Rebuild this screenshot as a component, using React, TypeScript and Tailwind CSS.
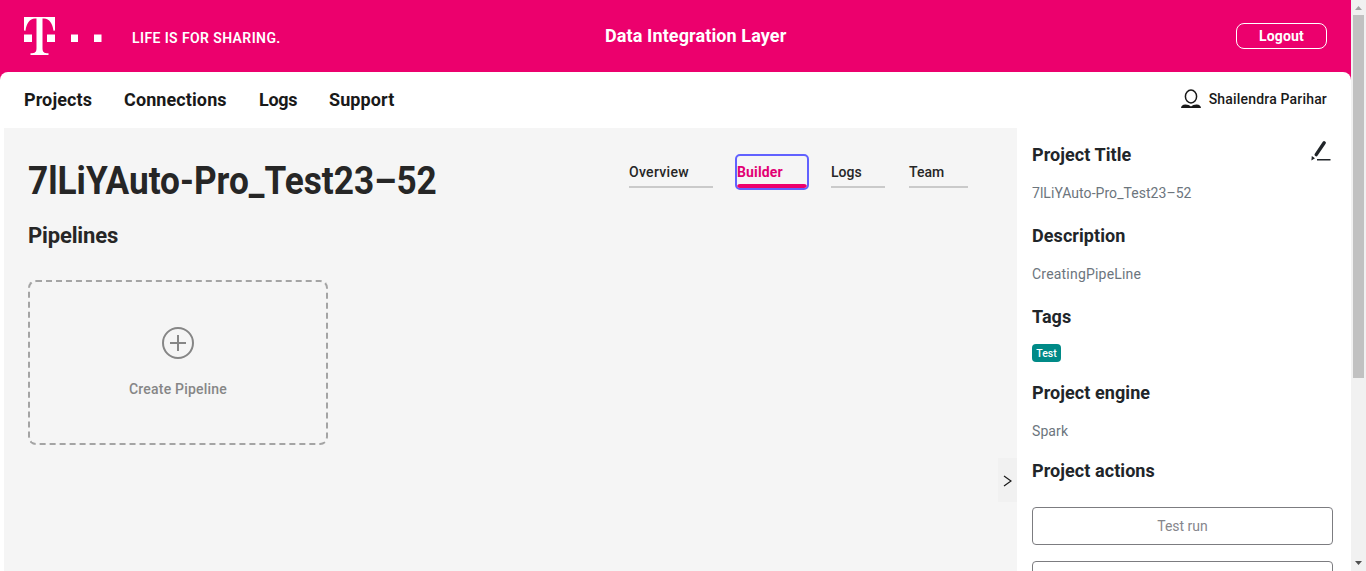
import React from 'react';

function TelekomLogo() {
  return (
    <svg width="78" height="38" viewBox="0 0 78 38" fill="#fff" aria-hidden="true">
      <path d="M0 0h31v13.500l-1.500.2C28.500 6.500 25.500 1.700 20 1.500H18.500V31c0 4 1.200 5.200 6 5.300V38H6.500v-1.700c4.800-.1 6-1.300 6-5.300V1.500H11C5.500 1.700 2.500 6.500 1.500 13.700L0 13.500z" />
      <path d="M0 17.500h8v7.500H0zM23 17.500h8v7.500h-8zM47 17.500h7v7.500h-7zM70 17.500h7.500v7.500H70z" />
    </svg>
  );
}

function Header() {
  return (
    <header className="flex h-[72px] shrink-0 items-center px-6 text-white">
      <TelekomLogo />
      <span className="ml-[30px] mt-[3px] w-[473px] text-[14px] font-semibold leading-5 tracking-[0.4px]">LIFE IS FOR SHARING.</span>
      <span className="grow text-[18px] font-bold leading-6 tracking-[0.11px]">Data Integration Layer</span>
      <button className="h-[26px] w-[91px] rounded-[8px] border border-white text-[14px] font-bold leading-5 tracking-[0.15px]">Logout</button>
    </header>
  );
}

function Nav() {
  return (
    <nav className="flex h-14 shrink-0 items-center rounded-t-[8px] bg-white px-6 text-[18px] font-bold leading-6 tracking-[0.1px] text-[#191919]">
      <a className="w-[100px]">Projects</a>
      <a className="w-[135px]">Connections</a>
      <a className="w-[70px] tracking-[-0.3px]">Logs</a>
      <a className="grow">Support</a>
      <svg width="20" height="20" viewBox="0 0 20 20" className="-mt-[2px] mr-2" aria-hidden="true">
        <ellipse cx="10" cy="7.500" rx="5.600" ry="6.400" fill="none" stroke="#191919" strokeWidth="1.500" />
        <path d="M0 19c.3-2.200 1.600-3.200 4.200-3.500 2.100-.1 4.500.8 5.800 2 1.300-1.200 3.700-2.100 5.800-2 2.600.3 3.900 1.300 4.200 3.500z" fill="#191919" />
      </svg>
      <span className="-mt-[2px] text-[14px] font-medium tracking-[0.18px]">Shailendra Parihar</span>
    </nav>
  );
}

function Tabs() {
  return (
    <div className="flex text-[14px] font-medium leading-5 text-[#262626]">
      <a className="mt-2 h-[26px] w-[84px] border-b-2 border-[#cacaca] tracking-[0.3px]">Overview</a>
      <a className="ml-[22px] h-9 w-[74px] overflow-hidden rounded-[5px] border-2 border-[#6161ff] pt-[6px] font-bold tracking-[0.15px] text-[#e20074]">
        Builder
        <span className="mt-[2px] block h-1 rounded-t-[3px] bg-[#ec006d]" />
      </a>
      <a className="ml-[22px] mt-2 h-[26px] w-[54px] border-b-2 border-[#cacaca]">Logs</a>
      <a className="ml-6 mt-2 h-[26px] w-[59px] border-b-2 border-[#cacaca]">Team</a>
    </div>
  );
}

function Builder() {
  return (
    <main className="flex grow bg-[#f5f5f5]">
      <div className="grow pl-6">
        <div className="flex pt-[26px]">
          <div className="w-[601px]">
            <h1 className="mt-[3px] origin-left scale-x-[0.927] whitespace-nowrap text-[38px] font-bold leading-[48px] text-[#262626]">7lLiYAuto-Pro_Test23–52</h1>
          </div>
          <Tabs />
        </div>
        <h2 className="mt-4 text-[22px] font-bold leading-[30px] tracking-[-0.15px] text-[#262626]">Pipelines</h2>
        <button className="mt-[29px] flex h-[165px] w-[300px] flex-col items-center rounded-[8px] border-2 border-dashed border-[#a4a4a4] pt-[45px] text-[#868686]">
          <svg width="32" height="32" viewBox="0 0 32 32" fill="none" stroke="currentColor" strokeWidth="2" aria-hidden="true">
            <circle cx="16" cy="16" r="15" />
            <path d="M8 16h16M16 8v16" />
          </svg>
          <span className="mt-5 text-[14px] font-medium leading-5 tracking-[0.2px]">Create Pipeline</span>
        </button>
      </div>
      <button className="mt-[330px] flex h-11 w-[19px] items-center justify-center bg-[#f1f1f1]">
        <svg width="9" height="12" viewBox="0 0 9 12" fill="none" stroke="#191919" strokeWidth="1.200" className="mt-px" aria-hidden="true">
          <path d="M1 1l7 5-7 5" />
        </svg>
      </button>
    </main>
  );
}

const heading = 'text-[18px] font-bold leading-6 tracking-[0.07px] text-[#212529]';
const value = 'mt-4 text-[14px] leading-5 text-[#6c757d]';

function Details() {
  return (
    <aside className="flex w-[334px] shrink-0 flex-col bg-white pl-[15px] pr-[18px] pt-[15px]">
      <div className="flex h-6 justify-between">
        <h3 className={heading}>Project Title</h3>
        <svg width="20" height="22" viewBox="0 0 20 22" className="-mt-[3px] mr-[2px]" fill="#212529" aria-hidden="true">
          <path d="M13.200 2.800L5.200 14.600" stroke="#212529" strokeWidth="3.400" strokeLinecap="round" />
          <path d="M.8 16l3.200 2.300L.4 20.500zM6 19h13.500v1.400H6z" />
        </svg>
      </div>
      <p className={value + ' tracking-[0.05px]'}>7lLiYAuto-Pro_Test23–52</p>
      <h3 className={'mt-[21px] ' + heading}>Description</h3>
      <p className={value + ' tracking-[0.2px]'}>CreatingPipeLine</p>
      <h3 className={'mt-[21px] ' + heading}>Tags</h3>
      <span className="mt-[15px] h-[18px] w-[29px] rounded-[4px] bg-[#008a87] pt-px text-center text-[10.500px] font-medium leading-[18px] text-white">Test</span>
      <h3 className={'mt-[19px] ' + heading}>Project engine</h3>
      <p className={value + ' tracking-[0.1px]'}>Spark</p>
      <h3 className={'mt-[18px] ' + heading}>Project actions</h3>
      <button className="mt-6 h-[38px] shrink-0 rounded-[4px] border border-[#7c7c80] text-[14px] leading-5 text-[#86868b]">Test run</button>
      <button className="mt-4 h-[38px] shrink-0 rounded-[4px] border border-[#7c7c80]" />
    </aside>
  );
}

function Scrollbar() {
  return (
    <div className="flex w-[15px] shrink-0 flex-col items-center bg-[#f1f1f1]">
      <svg width="15" height="15" viewBox="0 0 15 15" aria-hidden="true"><path d="M4 10h7L7.500 6z" fill="#a3a3a3" /></svg>
      <div className="h-[363px] w-[11px] bg-[#c1c1c1]" />
      <svg width="15" height="15" viewBox="0 0 15 15" className="mt-auto" aria-hidden="true"><path d="M4 5h7L7.500 9z" fill="#505050" /></svg>
    </div>
  );
}

export default function App() {
  return (
    <div className="flex h-[571px] w-[1366px] overflow-hidden bg-white font-['Roboto','Liberation_Sans',sans-serif]">
      <div className="flex w-[1351px] flex-col bg-[linear-gradient(#ec006d_80px,#fff_80px)]">
        <Header />
        <Nav />
        <div className="flex min-h-0 grow pl-1">
          <Builder />
          <Details />
        </div>
      </div>
      <Scrollbar />
    </div>
  );
}
